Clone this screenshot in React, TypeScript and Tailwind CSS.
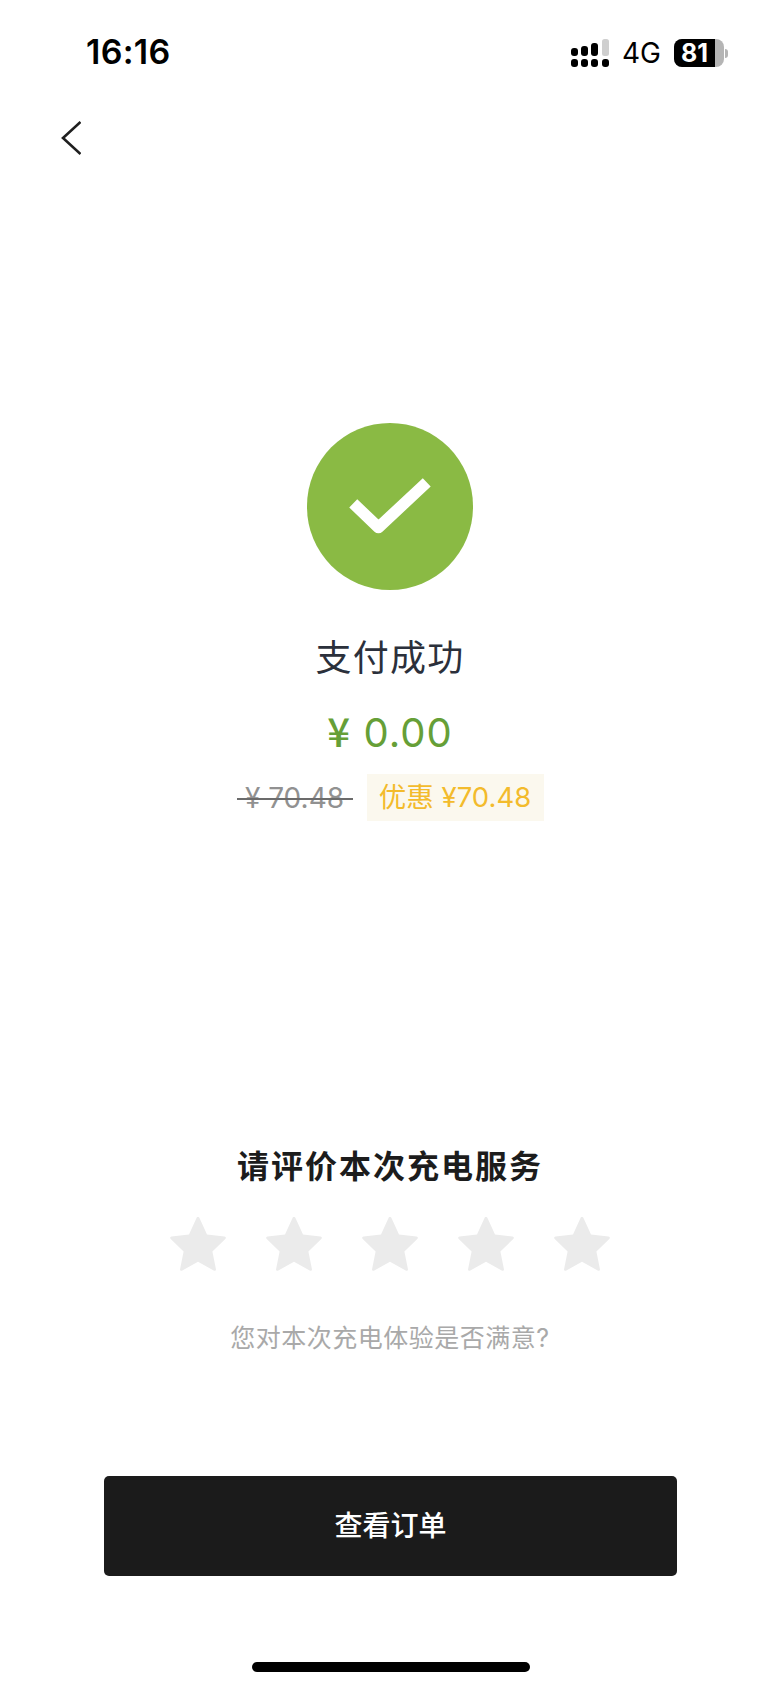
const cjk = "font-['Inter','Noto_Sans_CJK_SC',sans-serif]";

function Signal() {
  return (
    <svg width="38" height="28" viewBox="0 0 38 28" className="block">
      <g fill="#000">
        <rect x="0" y="9" width="7" height="8" rx="3" />
        <rect x="10" y="7" width="7" height="10" rx="3" />
        <rect x="20" y="4" width="7" height="13" rx="3" />
        <rect x="0" y="20" width="7" height="8" rx="3" />
        <rect x="10" y="20" width="7" height="8" rx="3" />
        <rect x="20" y="20" width="7" height="8" rx="3" />
        <rect x="31" y="20" width="7" height="8" rx="3" />
      </g>
      <rect x="31" y="0" width="7" height="17" rx="2.5" fill="#cfcfcf" />
    </svg>
  );
}

function Star() {
  return (
    <svg width="56" height="55" viewBox="0 0 56 55" className="block">
      <path
        d="M28 1c.8 0 1.300.5 1.700 1.400l7.300 16.100 17.400 1.900c1.500.2 2 1.600.9 2.600L42.400 35.400l3.500 17.600c.3 1.500-.9 2.300-2.200 1.600L28 45.800l-15.700 8.800c-1.300.7-2.500-.1-2.200-1.600l3.500-17.600L.7 23c-1.100-1-.6-2.400.9-2.600L19 18.500l7.300-16.100c.4-.9.900-1.400 1.700-1.400z"
        fill="#ebebeb"
      />
    </svg>
  );
}

export default function App() {
  return (
    <div className={`w-[780px] h-[1688px] bg-white flex flex-col overflow-hidden ${cjk}`}>
      <div className="h-[106px] pl-[86px] pr-[52px] pt-[34px] flex justify-between items-start">
        <span className="text-[34px] leading-[36px] font-semibold tracking-[0.3px] text-black font-['Inter',sans-serif]">16:16</span>
        <div className="flex items-center gap-[13px] pt-[5px]">
          <Signal />
          <span className="text-[28px] leading-[28px] font-normal text-black font-['Inter',sans-serif]">4G</span>
          <div className="flex items-center gap-[1px]">
            <div className="w-[50px] h-[28px] rounded-[8px] bg-[#b5b5b5] overflow-hidden">
              <div className="w-[41px] h-[28px] bg-black flex items-center justify-center">
                <span className="text-[25px] leading-[28px] font-bold text-white font-['Inter',sans-serif]">81</span>
              </div>
            </div>
            <div className="w-[3px] h-[9px] rounded-r-full bg-[#b5b5b5]" />
          </div>
        </div>
      </div>

      <div className="h-[317px] pl-[61px] pt-[15px]">
        <svg width="20" height="34" viewBox="0 0 20 34" fill="none" className="block">
          <path d="M19.500 1 L2 17 L19.500 33" stroke="#1f1f1f" strokeWidth="2.6" />
        </svg>
      </div>

      <div className="flex flex-col items-center">
        <div className="w-[166px] h-[167px] rounded-full bg-[#8aba44] flex items-center justify-center">
          <svg width="84" height="59" viewBox="0 0 80 56" fill="none" className="block">
            <path d="M5 25 L29 48 L75 5" stroke="#fff" strokeWidth="11" strokeLinejoin="round" />
          </svg>
        </div>
        <h1 className="mt-[44px] text-[36px] leading-[48px] font-normal tracking-[1.2px] text-[#2b303b]">支付成功</h1>
        <div className="mt-[23px] text-[40px] leading-[50px] font-normal text-[#669f37] tracking-[1px]">
          <span className="font-['Noto_Sans_CJK_SC',sans-serif] font-medium">¥</span> 0.00
        </div>
        <div className="mt-[17px] flex items-center">
          <span className="relative w-[116px] h-[40px] text-[28px] leading-[40px] text-[#919191] text-center whitespace-nowrap">
            ¥ 70.48
            <span className="absolute left-0 right-0 top-[20px] h-[2px] bg-[#6b6b6b]" />
          </span>
          <span className="ml-[14px] mt-[-1px] h-[47px] w-[177px] bg-[#fbf8ee] flex items-center justify-center text-[27.500px] text-[#f3bb2c] whitespace-nowrap">优惠 ¥70.48</span>
        </div>
      </div>

      <div className="mt-[324px] flex flex-col items-center">
        <h2 className="text-[32px] leading-[44px] font-semibold tracking-[2px] text-[#1c1c1c]">请评价本次充电服务</h2>
        <div className="mt-[27px] flex gap-[40px]">
          <Star />
          <Star />
          <Star />
          <Star />
          <Star />
        </div>
        <p className="mt-[49px] text-[25px] leading-[36px] tracking-[0.5px] text-[#a9a9a9]">您对本次充电体验是否满意?</p>
      </div>

      <div className="mt-[120px] pl-[104px] pr-[103px]">
        <button className="w-full h-[100px] rounded-[5px] bg-[#1b1b1b] text-white text-[28px] font-medium">查看订单</button>
      </div>

      <div className="mt-[86px] flex justify-center pl-[1px]">
        <div className="w-[278px] h-[10px] rounded-full bg-black" />
      </div>
    </div>
  );
}
